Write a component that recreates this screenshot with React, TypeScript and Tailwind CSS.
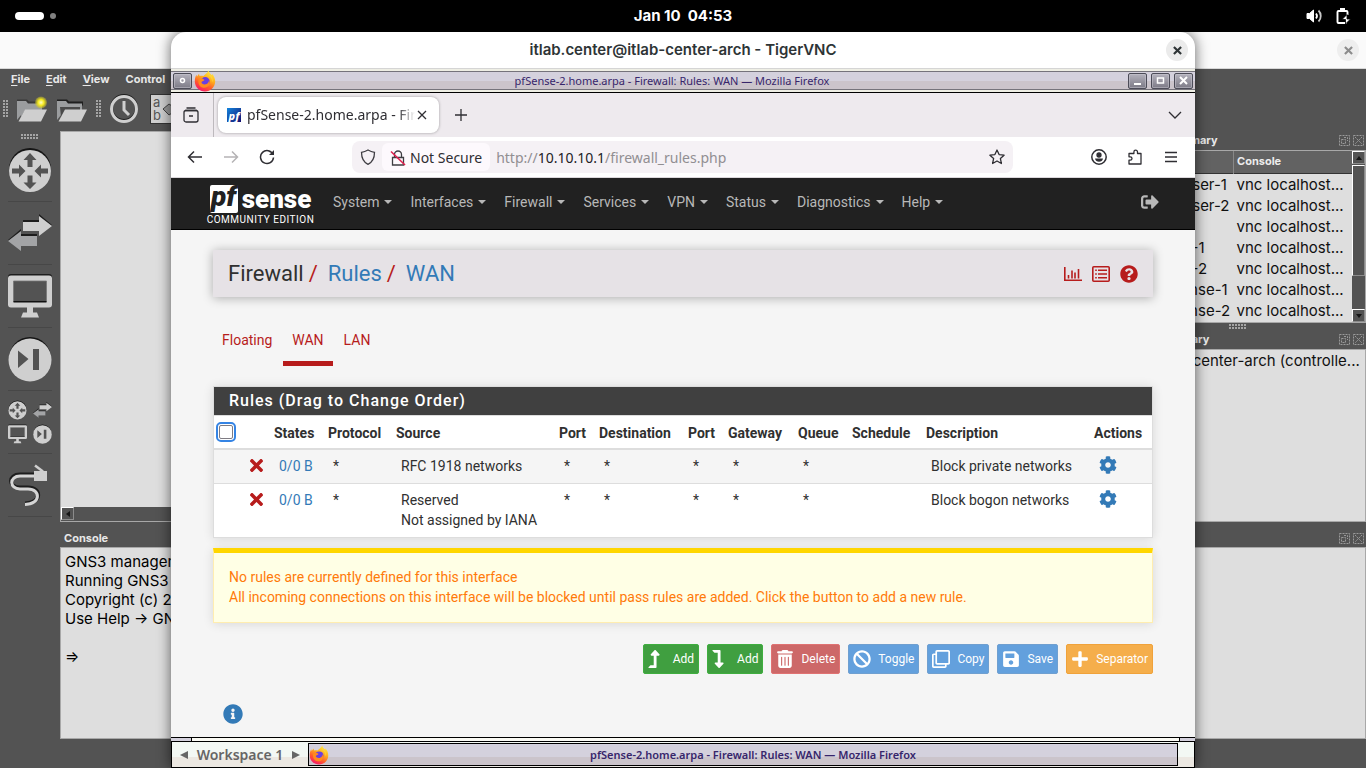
import type { ReactNode } from 'react'
import { FaBan, FaCog, FaInfoCircle, FaLevelDownAlt, FaLevelUpAlt, FaPlus, FaQuestionCircle, FaRegClone, FaSave, FaSignOutAlt, FaTimes } from 'react-icons/fa'
import { FaTrashCan } from 'react-icons/fa6'

const gnsMenu = ['File', 'Edit', 'View']

const nodes = ['Browser-1', 'Browser-2', 'ISP', 'WAN-1', 'WAN-2', 'pfSense-1', 'pfSense-2']

const consoleLines = [
  'GNS3 management console.',
  'Running GNS3 version 2.2',
  'Copyright (c) 2006-2025',
  'Use Help → GNS3 Doctor',
]

const menus = ['System', 'Interfaces', 'Firewall', 'Services', 'VPN', 'Status', 'Diagnostics', 'Help']

const tabs = [
  { label: 'Floating', active: false },
  { label: 'WAN', active: true },
  { label: 'LAN', active: false },
]

const columns = [
  { label: 'States', width: 'w-[54px]' },
  { label: 'Protocol', width: 'w-[68px]' },
  { label: 'Source', width: 'w-[163px]' },
  { label: 'Port', width: 'w-[40px]' },
  { label: 'Destination', width: 'w-[89px]' },
  { label: 'Port', width: 'w-[40px]' },
  { label: 'Gateway', width: 'w-[70px]' },
  { label: 'Queue', width: 'w-[54px]' },
  { label: 'Schedule', width: 'w-[74px]' },
  { label: 'Description', width: '' },
  { label: 'Actions', width: 'w-[63px]' },
]

const rules = [
  { source: ['RFC 1918 networks'], description: 'Block private networks' },
  { source: ['Reserved', 'Not assigned by IANA'], description: 'Block bogon networks' },
]

const actions = [
  { label: 'Add', icon: <FaLevelUpAlt className="h-[18px] w-3" />, tone: 'border-[#3fae3f] bg-[#409f40]' },
  { label: 'Add', icon: <FaLevelDownAlt className="h-[18px] w-3" />, tone: 'border-[#3fae3f] bg-[#409f40]' },
  { label: 'Delete', icon: <FaTrashCan className="size-[18px]" />, tone: 'border-[#e07272] bg-[#cd6868]' },
  { label: 'Toggle', icon: <FaBan className="size-[18px]" />, tone: 'border-[#6f9fd0] bg-[#63a0dd]' },
  { label: 'Copy', icon: <FaRegClone className="size-[18px]" />, tone: 'border-[#6f9fd0] bg-[#63a0dd]' },
  { label: 'Save', icon: <FaSave className="size-[18px]" />, tone: 'border-[#6f9fd0] bg-[#63a0dd]' },
  { label: 'Separator', icon: <FaPlus className="size-[18px]" />, tone: 'border-[#f0a23a] bg-[#f5ae4b]' },
]

function FirefoxLogo({ className }: { className: string }) {
  return (
    <svg viewBox="0 0 22 22" className={className} aria-hidden="true">
      <defs>
        <linearGradient id="fox" x1="0.8" y1="0" x2="0.3" y2="1">
          <stop offset="0" stopColor="#fff24a" />
          <stop offset="0.4" stopColor="#ffae1c" />
          <stop offset="0.7" stopColor="#ff5a2c" />
          <stop offset="1" stopColor="#f8126e" />
        </linearGradient>
      </defs>
      <path d="M14.5 0.5c.5 2.200 2 3.300 3.300 4.700.3-.4.3-1 .1-1.500 2 1.800 3.300 4.700 3.300 7.600 0 5.700-4.500 10.200-10.200 10.200S.8 17 .8 11.300c0-2.700.6-5 1.700-6.600l.4 2L5 3.800l.6 2.300C7 5.700 8 5.800 9.300 6.100 10.800 4.600 13 3.500 14.500.5z" fill="url(#fox)" />
      <circle cx="11.300" cy="11.600" r="4.500" fill="#6a3fe0" />
      <path d="M4.500 9.500c2.500-1.500 4.300-.9 6 .4-1 1.600-2.600 1-3 2.300-.3 1.200 2.100 2.700 4.300 2.100 2-.5 3.200-2.100 3.200-4 .9 1.300 1 3.400 0 5-1.200 2-4 3-6.500 2.300-3-.9-4.700-4.300-4-8.100z" fill="#ff8a1e" />
      <path d="M14 4.500c2 2 4.500 4 4 8 1.500-2.500.5-6-2-8.500z" fill="#ffd23a" />
    </svg>
  )
}

function CloseMark({ className }: { className: string }) {
  return (
    <svg viewBox="0 0 10 10" className={className} stroke="currentColor" strokeWidth="2.400" aria-hidden="true">
      <path d="M1 1l8 8M9 1L1 9" />
    </svg>
  )
}

function Grip({ vertical = false }: { vertical?: boolean }) {
  return (
    <svg viewBox={vertical ? '0 0 5 18' : '0 0 18 5'} className={vertical ? 'h-[18px] w-[5px]' : 'h-[5px] w-[18px]'} fill="#a5a5a5" aria-hidden="true">
      {[0, 3, 6, 9, 12, 15].map((p) =>
        vertical ? (
          <path key={p} d={`M0 ${p}h2v2h-2zM3 ${p}h2v2h-2z`} />
        ) : (
          <path key={p} d={`M${p} 0h2v2h-2zM${p} 3h2v2h-2z`} />
        ),
      )}
    </svg>
  )
}

function RouterIcon({ className }: { className: string }) {
  return (
    <svg viewBox="0 0 44 46" className={className} aria-hidden="true">
      <circle cx="22" cy="22" r="21" fill="#151515" />
      <circle cx="22" cy="24" r="21" fill="#cfcfcf" />
      <g fill="#535353">
        <path d="M22 6l6.500 7h-4v7h-5v-7h-4z" />
        <path d="M22 42l6.500-6.500h-4v-7h-5v7h-4z" />
        <path d="M4 21.500h7v-4l6.500 6.500-6.500 6.500v-4H4z" />
        <path d="M40 21.500h-7v-4L26.500 24l6.500 6.500v-4h7z" />
      </g>
    </svg>
  )
}

function SwitchIcon({ className }: { className: string }) {
  return (
    <svg viewBox="0 0 44 38" className={className} aria-hidden="true">
      <path d="M15 6h16V0l13 11-13 10v-5H15z" fill="#1d1d1d" />
      <path d="M15 8h16V2l13 10-13 10v-5H15z" fill="#cfcfcf" />
      <path d="M29 20H13v-5L0 26l13 10v-5h16z" fill="#1d1d1d" />
      <path d="M29 22H13v-5L0 27l13 10v-5h16z" fill="#a3a4a6" />
    </svg>
  )
}

function MonitorIcon({ className }: { className: string }) {
  return (
    <svg viewBox="0 0 44 44" className={className} aria-hidden="true">
      <rect width="44" height="31" rx="3" fill="#1d1d1d" />
      <path d="M3 1.500h38a3 3 0 0 1 3 3v26a3 3 0 0 1-3 3h-16v5h4l2 5H13l2-5h4v-5H3a3 3 0 0 1-3-3v-26a3 3 0 0 1 3-3z" fill="#cfcfcf" />
      <path d="M5.500 7h33v20.500h-33z" fill="#535353" stroke="#777" strokeWidth="0.8" />
      <path d="M5.500 27h33v1.500h-33z" fill="#111" />
    </svg>
  )
}

function SkipIcon({ className }: { className: string }) {
  return (
    <svg viewBox="0 0 44 46" className={className} aria-hidden="true">
      <circle cx="22" cy="22" r="21" fill="#151515" />
      <circle cx="22" cy="24" r="21.500" fill="#cfcfcf" />
      <path d="M10 14.500l10.500 8.500L10 32zM25 13h6v21h-6z" fill="#535353" />
    </svg>
  )
}

function CableIcon() {
  return (
    <svg viewBox="0 0 44 44" className="size-11" fill="none" aria-hidden="true">
      <path d="M27 11.500H12c-12 0-12 13 0 13h8c14 0 14 16-3 16" stroke="#1d1d1d" strokeWidth="4" />
      <path d="M27 13H12c-11 0-11 13 0 13h8c13 0 13 15.500-3 15.500" stroke="#d5d5d5" strokeWidth="3" />
      <path d="M27 2.500l8 6" stroke="#cfcfcf" strokeWidth="2.500" />
      <path d="M26 8h13v10H26z" fill="#cfcfcf" />
    </svg>
  )
}

function FolderIcon({ fresh = false }: { fresh?: boolean }) {
  return (
    <svg viewBox="0 0 32 26" className="h-[26px] w-8" aria-hidden="true">
      <path d="M1 5V3.500h10l2 2h14v4H7L1 22z" fill={fresh ? '#3a3a3a' : '#1f1f1f'} />
      <path d="M1 22V5h9l2 2.500h14V14H9L1 24z" fill="#9b9d9f" />
      <path d="M4 11h20v3H9l-4 7z" fill={fresh ? '#9b9d9f' : '#4a4a4a'} />
      <path d="M9 13.500h22L25 25.500H2.500z" fill="#cfcfcf" />
      {fresh ? <circle cx="25" cy="6.500" r="6" fill="url(#glow)" /> : null}
      <defs>
        <radialGradient id="glow">
          <stop offset="0" stopColor="#ffffc8" />
          <stop offset="0.5" stopColor="#f6ea1c" />
          <stop offset="1" stopColor="#c8bf2a" stopOpacity="0.4" />
        </radialGradient>
      </defs>
    </svg>
  )
}

function DockHeader({ title, bottom = false }: { title: string; bottom?: boolean }) {
  return (
    <div className={`flex items-center justify-between px-1 text-[11px] font-bold text-[#e8e8e8] ${bottom ? 'h-[25px] pt-2' : 'h-[19px]'}`}>
      <span>{title}</span>
      <span className="-mr-1 flex gap-[3px] pr-0.5 text-[#9a9a9a]">
        <button type="button" aria-label="Float">
          <svg viewBox="0 0 11 11" className="size-[11px]" fill="none" stroke="currentColor" strokeDasharray="2 1">
            <path d="M.5.500h10v10H.5zM2.500 4.500h4v4h-4zM5 2.500h3.500V6" />
          </svg>
        </button>
        <button type="button" aria-label="Close dock">
          <svg viewBox="0 0 11 11" className="size-[11px]" fill="none" stroke="currentColor" strokeDasharray="2 1">
            <path d="M.5.500h10v10H.5zM2 2l7 7M9 2l-7 7" />
          </svg>
        </button>
      </span>
    </div>
  )
}

function ScrollButton({ d }: { d: string }) {
  return (
    <button type="button" aria-label="Scroll" className="flex size-[13px] shrink-0 items-center justify-center border border-[#8c8c8c] border-t-white border-l-white bg-[#535353]">
      <svg viewBox="0 0 6 6" className="size-1.5" fill="#151515"><path d={d} /></svg>
    </button>
  )
}

function GnsWindow() {
  return (
    <div className="flex h-full flex-col bg-[#535353] text-[#e8e8e8]">
      <div className="flex h-[37px] shrink-0 items-center justify-end border-b border-[#d8d8d8] bg-[#fafafa] pr-[7px]">
        <button type="button" aria-label="Close GNS3" className="flex size-[22px] items-center justify-center rounded-full bg-[#eeeeee] text-[#8c8c8c]">
          <CloseMark className="size-[9px]" />
        </button>
      </div>
      <div className="flex h-5 shrink-0 items-center gap-4 px-[11px] text-[11px] font-bold">
        {gnsMenu.map((item) => (
          <button type="button" key={item}>
            <u className="underline-offset-2">{item[0]}</u>{item.slice(1)}
          </button>
        ))}
        <button type="button">Control</button>
      </div>
      <div className="flex h-[42px] shrink-0 items-center gap-2 px-[3px] pb-0.5">
        <Grip vertical />
        <button type="button" aria-label="New project"><FolderIcon fresh /></button>
        <button type="button" aria-label="Open project"><FolderIcon /></button>
        <Grip vertical />
        <button type="button" aria-label="Snapshot">
          <svg viewBox="0 0 30 30" className="size-[30px]" fill="none">
            <circle cx="15" cy="14" r="12.500" stroke="#1d1d1d" strokeWidth="3" />
            <circle cx="15" cy="15" r="12.500" stroke="#cfcfcf" strokeWidth="3" />
            <path d="M15 7v9l5 5" stroke="#cfcfcf" strokeWidth="3" />
          </svg>
        </button>
        <button type="button" aria-label="Show labels" className="ml-1 flex h-7 w-9 items-center gap-0.5 bg-[#cfcfcf] pl-0.5 text-left text-[13px] leading-[13px] text-[#555] ring-1 ring-[#333]">
          <span className="w-[7px]">a b</span>
          <svg viewBox="0 0 20 14" className="h-3.5 w-5" fill="#9a9a9a" stroke="#444" aria-hidden="true"><path d="M1 7l6-5 3 2h9v7h-9l-3 2z" /></svg>
        </button>
      </div>
      <div className="flex min-h-0 flex-1">
        <div className="flex w-[60px] shrink-0 flex-col items-center pt-[3px]">
          <Grip />
          {[
            <RouterIcon key="r" className="h-[46px] w-11" />,
            <SwitchIcon key="s" className="h-[38px] w-11" />,
            <MonitorIcon key="m" className="size-11" />,
            <SkipIcon key="k" className="h-[46px] w-11" />,
            <span key="all" className="grid grid-cols-2 gap-x-1.5 gap-y-1">
              <RouterIcon className="h-5 w-[19px]" />
              <SwitchIcon className="h-5 w-[19px]" />
              <MonitorIcon className="h-5 w-[19px]" />
              <SkipIcon className="h-5 w-[19px]" />
            </span>,
            <CableIcon key="c" />,
          ].map((icon, i) => (
            <button type="button" key={i} aria-label="Device group" className="flex h-[63px] w-11 shrink-0 items-center justify-center border-b border-[#474747]">
              {icon}
            </button>
          ))}
        </div>
        <div className="flex min-w-0 flex-1 flex-col">
          <div className="flex h-[391px] shrink-0">
            <div className="flex min-w-0 flex-1 flex-col border border-[#a8a8a8] bg-[#dedede]">
              <div className="flex-1" />
              <div className="flex h-3.5 bg-[#535353]"><ScrollButton d="M5 0v6L1 3z" /></div>
            </div>
            <div className="ml-1 flex w-[257px] shrink-0 flex-col">
              <DockHeader title="Topology Summary" />
              <div className="flex h-[173px] border border-[#a8a8a8] bg-[#dedede]">
                <table className="flex-1 table-fixed self-start text-[15px] leading-[21px] whitespace-nowrap text-[#111]">
                  <thead>
                    <tr className="h-[22px] border-b border-[#333] bg-[#626262] text-left text-[11px] text-[#ececec]">
                      <th className="w-[123px] border-r border-[#888] px-1">Node</th>
                      <th className="w-[118px] px-[3px]">Console</th>
                    </tr>
                  </thead>
                  <tbody>
                    {nodes.map((node) => (
                      <tr key={node}>
                        <td className="h-[21px] pl-[46px]">{node}</td>
                        <td className="h-[21px] pl-[3px]">vnc localhost...</td>
                      </tr>
                    ))}
                  </tbody>
                </table>
                <div className="flex w-[13px] shrink-0 flex-col justify-between bg-[#535353]">
                  <ScrollButton d="M0 5h6L3 1z" />
                  <div className="mt-px mb-auto h-[111px] border border-[#8c8c8c] border-t-white border-l-white" />
                  <ScrollButton d="M0 1h6L3 5z" />
                </div>
              </div>
              <div className="flex h-[7px] items-center justify-center overflow-hidden"><Grip /></div>
              <DockHeader title="Servers Summary" />
              <div className="flex-1 border border-[#a8a8a8] bg-[#dedede] pl-[46px] text-[15px] leading-[21px] whitespace-nowrap text-[#111]">
                itlab-center-arch (controlle...
              </div>
            </div>
          </div>
          <DockHeader title="Console" bottom />
          <div className="flex-1 border border-[#a8a8a8] bg-[#dedede] px-1 pt-1 text-[15px] leading-[19px] text-black">
            {consoleLines.map((line) => (
              <p key={line}>{line}</p>
            ))}
            <p className="pt-[19px]">⇒</p>
          </div>
          <div className="h-[29px] shrink-0" />
        </div>
      </div>
    </div>
  )
}

function FrameButton({ label, children }: { label: string; children: ReactNode }) {
  return (
    <button type="button" aria-label={label} className="flex h-4 w-[19px] shrink-0 items-center justify-center rounded-xs border border-[#4c4c58] bg-linear-to-b from-[#b4b2bd] to-[#7d7b87] inset-ring inset-ring-[#c9c7d2]/50">
      <svg viewBox="0 0 9 9" className="size-[9px]" fill="none" stroke="white" strokeWidth="2">{children}</svg>
    </button>
  )
}

function ToolButton({ label, children, faded = false }: { label: string; children: ReactNode; faded?: boolean }) {
  return (
    <button type="button" aria-label={label} className={`flex h-8 w-9 shrink-0 items-center justify-center ${faded ? 'text-[#b5b3b5]' : 'text-[#2f2e33]'}`}>
      <svg viewBox="0 0 16 16" className="size-4" fill="none" stroke="currentColor" strokeWidth="1.300">{children}</svg>
    </button>
  )
}

function BrowserChrome() {
  return (
    <div className="shrink-0 font-['Noto_Sans',sans-serif] text-sm text-[#2f2e33]">
      <div className="flex h-11 items-center bg-[#eeeaee] pl-0.5">
        <ToolButton label="Recent browsing">
          <path d="M3.500 1h9M2 3.500h12" />
          <rect x="1" y="3.500" width="14" height="11.500" rx="2" />
          <path d="M6 9h4" strokeWidth="1.600" />
        </ToolButton>
        <div className="mr-1 ml-1 h-full w-px bg-[#bdb9bd]" />
        <div className="mr-1 flex h-9 w-[221px] items-center rounded-lg bg-white pr-3 pl-[9px] shadow-[0_0_3px_rgba(0,0,0,0.35)]">
          <span className="flex size-3.5 shrink-0 items-center justify-center bg-linear-to-br from-[#1186e0] to-[#14096e] text-[11px] leading-none font-extrabold text-white italic">pf</span>
          <span className="ml-1.5 min-w-0 flex-1 mask-r-from-90% whitespace-nowrap">pfSense-2.home.arpa - Fire</span>
          <button type="button" aria-label="Close tab" className="ml-0.5">
            <svg viewBox="0 0 10 10" className="size-2.5" stroke="currentColor" strokeWidth="1.300"><path d="M1 1l8 8M9 1L1 9" /></svg>
          </button>
        </div>
        <ToolButton label="New tab"><path d="M8 2v12M2 8h12" /></ToolButton>
        <div className="flex-1" />
        <div className="pr-0.5">
          <ToolButton label="List all tabs"><path d="M2 5l6 6 6-6" /></ToolButton>
        </div>
      </div>
      <div className="flex h-[41px] items-center border-b border-[#dcd8dc] bg-white px-1.5">
        <ToolButton label="Back"><path d="M15 8H1.500M7 2.500L1.500 8 7 13.500" strokeWidth="1.500" /></ToolButton>
        <ToolButton label="Forward" faded><path d="M1 8h13.500M9 2.500L14.500 8 9 13.500" strokeWidth="1.500" /></ToolButton>
        <ToolButton label="Reload">
          <path d="M14 5.500A6.500 6.500 0 1 0 14.500 8.500" strokeWidth="1.500" />
          <path d="M15 1v5h-5z" fill="currentColor" stroke="none" />
        </ToolButton>
        <div className="mr-[68px] ml-[67px] flex h-8 flex-1 items-center rounded-lg bg-[#f5f1f5]">
          <span className="flex w-[30px] justify-center pl-px">
            <svg viewBox="0 0 16 16" className="size-4" fill="none" stroke="#3f3e43" strokeWidth="1.300">
              <path d="M8 1C6 2.200 4 3 1.500 3.300 1.500 9 3 13 8 15.300c5-2.300 6.500-6.300 6.500-12C12 3 10 2.200 8 1z" />
            </svg>
          </span>
          <button type="button" className="flex h-7 items-center gap-1 rounded-md bg-[#fdf9fd] px-2 pt-0.5">
            <svg viewBox="0 0 16 16" className="size-4" fill="none" strokeWidth="1.300" aria-hidden="true">
              <path d="M4.500 7.500V4.500a3.500 3.500 0 0 1 7 0v3M2.500 7.500h11v7.500h-11z" stroke="#3f3e43" />
              <path d="M1 1.500l14 13.500" stroke="#e0204f" strokeWidth="1.600" />
            </svg>
            Not Secure
          </button>
          <div role="textbox" aria-label="Address" contentEditable suppressContentEditableWarning className="ml-1.5 flex-1 pt-0.5 whitespace-nowrap text-[#918e92] outline-none">
            http://<span className="text-[#222125]">10.10.10.1</span>/firewall_rules.php
          </div>
          <div className="-mr-0.5">
            <ToolButton label="Bookmark">
              <path d="M8 1l2.100 4.600 5 .6-3.700 3.400 1 4.900L8 12l-4.400 2.500 1-4.900L.9 6.200l5-.6z" strokeLinejoin="round" />
            </ToolButton>
          </div>
        </div>
        <ToolButton label="Account">
          <circle cx="8" cy="8" r="7.200" strokeWidth="1.500" />
          <circle cx="8" cy="6" r="2" fill="currentColor" />
          <path d="M4 9.500h8c-.3 2.200-2 3.300-4 3.300s-3.700-1.100-4-3.300z" fill="currentColor" stroke="none" />
        </ToolButton>
        <ToolButton label="Extensions">
          <path d="M2 15h12V4.500h-3.500V3a1.800 1.800 0 0 0-3.600 0v1.500H2v3.300h1.300a1.700 1.700 0 0 1 0 3.400H2z" strokeLinejoin="round" />
        </ToolButton>
        <ToolButton label="Menu"><path d="M2 3.500h12M2 8h12M2 12.500h12" /></ToolButton>
      </div>
    </div>
  )
}

function PfSensePage() {
  return (
    <div className="min-h-0 flex-1 bg-[#f5f5f5] font-[Roboto,sans-serif] text-sm leading-5 text-[#303030]">
      <nav className="flex h-[52px] items-center border-b border-black bg-[#212121] px-9 pb-1 text-[#b8b8b8]">
        <a href="#home" className="mr-[19px] flex w-[107px] flex-col items-center pt-2 text-white">
          <span className="flex items-center gap-1 leading-none font-black">
            <span className="flex size-7 items-center justify-center rounded-xs bg-white pb-1 text-[28px] text-[#212121] italic">pf</span>
            <span className="text-[26px] leading-7">sense</span>
          </span>
          <span className="pt-px text-[10px] leading-3 tracking-[0.5px] whitespace-nowrap">COMMUNITY EDITION</span>
        </a>
        <div className="flex gap-[18px]">
          {menus.map((menu) => (
            <button type="button" key={menu} className="flex items-center gap-[5px]">
              {menu}
              <svg viewBox="0 0 8 4" className="h-1 w-2 fill-current" aria-hidden="true"><path d="M0 0h8L4 4z" /></svg>
            </button>
          ))}
        </div>
        <a href="#logout" aria-label="Logout" className="ml-auto"><FaSignOutAlt className="size-[18px]" /></a>
      </nav>

      <div className="px-[42px] pt-5">
        <header className="flex h-[47px] items-center justify-between bg-[#e6e2e6] px-[15px] shadow-[0_1px_10px_rgba(0,0,0,0.3)]">
          <h1 className="flex text-[22px] leading-6">
            <span>Firewall</span>
            <span className="pr-2.5 pl-[5px] text-[#b71c1c]">/</span>
            <a href="#rules" className="text-[#337ab7]">Rules</a>
            <span className="pr-2.5 pl-[5px] text-[#b71c1c]">/</span>
            <a href="#wan" className="text-[#337ab7]">WAN</a>
          </h1>
          <div className="flex items-center gap-2.5 text-[#b71c1c]">
            <a href="#graph" aria-label="Graph">
              <svg viewBox="0 0 18 18" className="size-[18px]" fill="none" stroke="currentColor" strokeWidth="1.600" aria-hidden="true">
                <path d="M.8 2v13.200H18M4.500 13.500V10M8 13.500V5.500M11 13.500V7.500M14.500 13.500V4" />
              </svg>
            </a>
            <a href="#log" aria-label="Log">
              <svg viewBox="0 0 18 18" className="size-[18px]" fill="none" stroke="currentColor" strokeWidth="1.600" aria-hidden="true">
                <rect x="0.800" y="1.800" width="16.400" height="14.400" rx="1" />
                <path d="M3.200 5.200h1.600M6 5.200h9M3.200 9h1.600M6 9h9M3.200 12.800h1.600M6 12.800h9" />
              </svg>
            </a>
            <a href="#help" aria-label="Help"><FaQuestionCircle className="size-[18px]" /></a>
          </div>
        </header>

        <div className="mt-7 flex gap-0.5 text-[#b71c1c]">
          {tabs.map((tab) => (
            <a key={tab.label} href="#tab" className={`border-b-[5px] px-[9px] pt-[5px] pb-[11px] ${tab.active ? 'border-[#b71c1c]' : 'border-transparent'}`}>
              {tab.label}
            </a>
          ))}
        </div>

        <section className="mt-5 border border-[#dddddd] bg-white shadow-[0_1px_10px_rgba(0,0,0,0.12)]">
          <h2 className="border-b border-[#dddddd] bg-[#404040] px-[15px] py-1 text-base leading-5 font-medium tracking-[1px] text-white">Rules (Drag to Change Order)</h2>
          <table className="w-full table-fixed text-left">
            <thead>
              <tr className="h-[33px] border-b-2 border-[#dddddd]">
                <th className="w-[30px] pl-[5px]">
                  <input type="checkbox" aria-label="Select all" className="block size-3.5 appearance-none rounded-xs border border-[#7f7c83] bg-white outline-2 outline-offset-1 outline-[#3584e4]" />
                </th>
                <th className="w-[25px]" aria-label="Type" />
                {columns.map((column, i) => (
                  <th key={i} className={`px-[5px] pt-px font-bold ${column.width}`}>{column.label}</th>
                ))}
              </tr>
            </thead>
            <tbody>
              {rules.map((rule) => (
                <tr key={rule.description} className="border-b border-[#dddddd] align-top last:border-b-0 odd:bg-[#f5f5f5] [&>td]:pt-1.5 [&>td]:pb-[7px] [&>td]:pl-2.5">
                  <td />
                  <td className="!pl-[3px]"><FaTimes className="size-[19px] text-[#b71c1c]" /></td>
                  <td><a href="#states" className="text-[#337ab7]">0/0 B</a></td>
                  <td>*</td>
                  <td>{rule.source.map((line) => <p key={line}>{line}</p>)}</td>
                  <td>*</td>
                  <td>*</td>
                  <td>*</td>
                  <td>*</td>
                  <td>*</td>
                  <td />
                  <td className="whitespace-nowrap">{rule.description}</td>
                  <td><a href="#settings" aria-label="Settings" className="block"><FaCog className="size-[18px] text-[#337ab7]" /></a></td>
                </tr>
              ))}
            </tbody>
          </table>
        </section>

        <div role="alert" className="mt-2.5 border border-t-[5px] border-[#ffedb0] border-t-[#ffd600] bg-[#ffffe5] px-[15px] pt-3.5 pb-[15px] text-[#ff7a0a] shadow-[0_1px_10px_rgba(0,0,0,0.12)]">
          <p>No rules are currently defined for this interface</p>
          <p>All incoming connections on this interface will be blocked until pass rules are added. Click the button to add a new rule.</p>
        </div>

        <div className="mt-[21px] flex justify-end gap-2">
          {actions.map((action, i) => (
            <button type="button" key={i} className={`flex h-[30px] items-center rounded-xs border px-1 text-xs text-white ${action.tone}`}>
              <span className="mr-[7px] w-[18px]">{action.icon}</span>
              {action.label}
            </button>
          ))}
        </div>

        <button type="button" aria-label="Info" className="mt-[30px] ml-2.5 block text-[#337ab7]"><FaInfoCircle className="size-5" /></button>
      </div>
    </div>
  )
}

function VncWindow() {
  return (
    <div className="absolute inset-x-[171px] inset-y-0 flex flex-col overflow-hidden rounded-t-[15px] bg-white shadow-[0_0_14px_rgba(0,0,0,0.6)]">
      <div className="relative flex h-[37px] shrink-0 items-center justify-center border-b border-[#d5d5d5] text-[#2e3436]">
        <h1 className="text-[15px] font-semibold">itlab.center@itlab-center-arch - TigerVNC</h1>
        <button type="button" aria-label="Close" className="absolute right-[7px] flex size-[22px] items-center justify-center rounded-full bg-[#ebebeb]">
          <CloseMark className="size-[9px]" />
        </button>
      </div>
      <div className="flex h-6 shrink-0 flex-col justify-center border-b border-black bg-[#eeeee4]">
        <div className="flex h-[19px] items-center gap-1 border-y border-[#75737b] bg-linear-to-b from-[#d4d1dd] from-50% to-[#cbc4cb] to-50% px-0.5">
          <FrameButton label="Window menu"><circle cx="4.500" cy="4.500" r="2" strokeWidth="1.500" /></FrameButton>
          <FirefoxLogo className="-ml-0.5 size-[22px]" />
          <span className="flex-1 pt-px text-center font-['Noto_Sans',sans-serif] text-[11px] text-[#37266b]">pfSense-2.home.arpa - Firewall: Rules: WAN — Mozilla Firefox</span>
          <FrameButton label="Minimize"><path d="M1 8h7" /></FrameButton>
          <FrameButton label="Maximize"><path d="M1.500 2h6v5h-6z" strokeWidth="1.500" /></FrameButton>
          <FrameButton label="Close Firefox"><path d="M1 1l7 7M8 1L1 8" /></FrameButton>
        </div>
      </div>
      <BrowserChrome />
      <PfSensePage />
      <div className="flex h-1 shrink-0 justify-between border-t border-black bg-[#fbfbf5]">
        <span className="w-[21px] border-r border-black bg-[#d4d1dd]" />
        <span className="w-4 border-l border-black bg-[#d4d1dd]" />
      </div>
      <div className="flex h-[27px] shrink-0 items-center border border-black bg-linear-to-b from-[#f3f8f4] from-60% to-[#ece8e2] to-60% font-['Noto_Sans',sans-serif] font-semibold">
        <div className="flex w-[136px] items-center justify-between px-2 text-sm text-[#666666]">
          <button type="button" aria-label="Previous workspace"><svg viewBox="0 0 8 8" className="size-2 fill-current"><path d="M8 0v8L0 4z" /></svg></button>
          <span>Workspace 1</span>
          <button type="button" aria-label="Next workspace"><svg viewBox="0 0 8 8" className="size-2 fill-current"><path d="M0 0v8l8-4z" /></svg></button>
        </div>
        <button type="button" className="mr-4 flex h-[23px] flex-1 items-center border border-black bg-linear-to-b from-[#d4d1dd] from-60% to-[#cbc4cb] to-60% text-[11px] text-[#37266b]">
          <FirefoxLogo className="size-5" />
          <span className="flex-1 pt-px">pfSense-2.home.arpa - Firewall: Rules: WAN — Mozilla Firefox</span>
        </button>
      </div>
    </div>
  )
}

export default function App() {
  return (
    <div className="flex h-screen flex-col overflow-hidden bg-black font-[Inter,sans-serif]">
      <header className="grid h-8 shrink-0 grid-cols-3 items-center px-[15px] text-[15px] font-bold text-white">
        <div className="flex items-center gap-1.5">
          <span className="h-2 w-[29px] rounded-full bg-white" />
          <span className="size-1.5 rounded-full bg-[#808080]" />
        </div>
        <time className="text-center whitespace-pre">Jan 10  04:53</time>
        <div className="flex items-center justify-end gap-3">
          <svg viewBox="0 0 17 16" className="h-4 w-[17px]" fill="none" stroke="white" strokeWidth="1.800" aria-hidden="true">
            <path d="M1 5.500h2.500L7.500 2v12l-4-3.500H1z" fill="white" strokeWidth="1" />
            <path d="M10 5.500c1.200 1.500 1.200 3.500 0 5" />
            <path d="M12.500 2.500c3 3 3 8 0 11" stroke="#c8c8c8" />
          </svg>
          <svg viewBox="0 0 16 16" className="size-4" fill="none" stroke="white" strokeWidth="1.900" aria-hidden="true">
            <path d="M5 0h5v2.500H5z" fill="white" stroke="none" />
            <path d="M7.500 15H3.500a1 1 0 0 1-1-1V4a1 1 0 0 1 1-1h8a1 1 0 0 1 1 1v3M11.500 15h-4" />
            <path d="M12 6.500l-5 5h3.500V16l5-5h-3.500z" fill="white" stroke="black" strokeWidth="0.800" />
          </svg>
        </div>
      </header>
      <main className="relative min-h-0 flex-1">
        <GnsWindow />
        <VncWindow />
      </main>
    </div>
  )
}
